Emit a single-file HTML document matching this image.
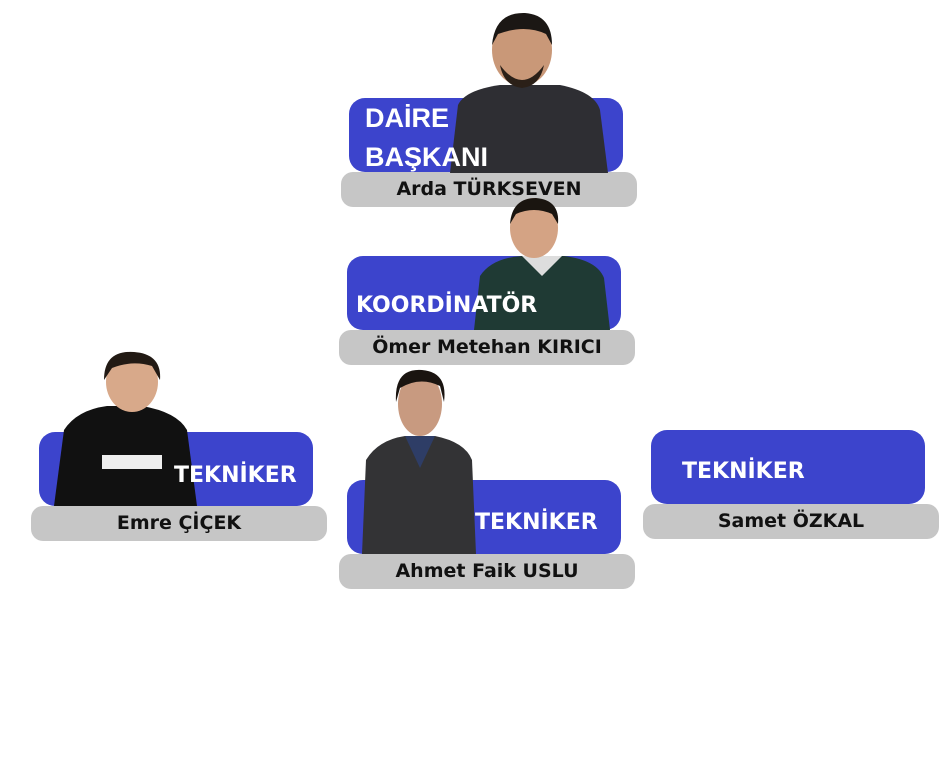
<!DOCTYPE html>
<html><head><meta charset="utf-8"><style>
body{margin:0;width:950px;height:759px;background:#fff;position:relative;overflow:hidden;font-family:"DejaVu Sans",sans-serif;}
.b{position:absolute;background:#3c44cc;border-radius:16px;width:274px;height:74px;}
.g{position:absolute;background:#c6c6c6;border-radius:12px;width:296px;height:35px;text-align:center;line-height:35px;font-weight:bold;font-size:19px;color:#111;}
.t{position:absolute;color:#fff;font-weight:bold;z-index:3;}
svg{position:absolute;z-index:2}
</style></head><body>
<div class="b" style="left:349px;top:98px"></div>
<svg style="left:440px;top:10px" width="180" height="163"><path d="M10 163 L18 95 Q25 80 60 75 L120 75 Q155 82 160 100 L168 163Z" fill="#2e2e33"/><ellipse cx="82" cy="40" rx="30" ry="36" fill="#c99878"/><path d="M52 35 Q55 2 85 3 Q112 5 112 35 L106 24 Q85 14 58 24Z" fill="#1b1714"/><path d="M60 55 Q82 85 104 55 Q100 76 82 78 Q64 76 60 55Z" fill="#2b2018"/></svg>
<div class="t" style="left:365px;top:99px;font-size:25px;line-height:39px;font-family:'Liberation Sans',sans-serif;font-size:27px">DAİRE<br>BAŞKANI</div>
<div class="g" style="left:341px;top:172px">Arda TÜRKSEVEN</div>

<div class="b" style="left:347px;top:256px"></div>
<svg style="left:472px;top:196px" width="140" height="134"><path d="M2 134 L8 80 Q20 62 50 60 L92 60 Q125 64 132 82 L138 134Z" fill="#1f3a34"/><path d="M50 60 L70 80 L90 60Z" fill="#ddd"/><ellipse cx="62" cy="32" rx="24" ry="30" fill="#d4a384"/><path d="M38 28 Q40 2 64 2 Q88 4 86 28 L80 18 Q62 10 44 18Z" fill="#1a1510"/></svg>
<div class="t" style="left:356px;top:293px;font-size:22px">KOORDİNATÖR</div>
<div class="g" style="left:339px;top:330px">Ömer Metehan KIRICI</div>

<div class="b" style="left:39px;top:432px"></div>
<svg style="left:52px;top:350px" width="150" height="156"><path d="M2 156 L12 80 Q25 60 55 56 L90 56 Q125 62 135 80 L145 156Z" fill="#111"/><rect x="50" y="105" width="60" height="14" fill="#eee"/><ellipse cx="80" cy="32" rx="26" ry="30" fill="#d8a98a"/><path d="M52 30 Q52 0 82 2 Q110 4 108 30 L100 16 Q80 10 60 18Z" fill="#221a14"/></svg>
<div class="t" style="left:174px;top:463px;font-size:22px">TEKNİKER</div>
<div class="g" style="left:31px;top:506px">Emre ÇİÇEK</div>

<div class="b" style="left:347px;top:480px"></div>
<svg style="left:360px;top:368px" width="118" height="186"><path d="M2 186 L6 92 Q18 72 45 68 L75 68 Q105 74 112 92 L116 186Z" fill="#333335"/><path d="M45 68 L60 100 L75 68Z" fill="#2e3d66"/><ellipse cx="60" cy="36" rx="22" ry="32" fill="#c89a80"/><path d="M36 34 Q34 0 62 2 Q88 4 84 34 L80 18 Q60 8 40 20Z" fill="#1a1410"/></svg>
<div class="t" style="left:475px;top:510px;font-size:22px">TEKNİKER</div>
<div class="g" style="left:339px;top:554px">Ahmet Faik USLU</div>

<div class="b" style="left:651px;top:430px"></div>
<div class="t" style="left:682px;top:459px;font-size:22px">TEKNİKER</div>
<div class="g" style="left:643px;top:504px">Samet ÖZKAL</div>
</body></html>
